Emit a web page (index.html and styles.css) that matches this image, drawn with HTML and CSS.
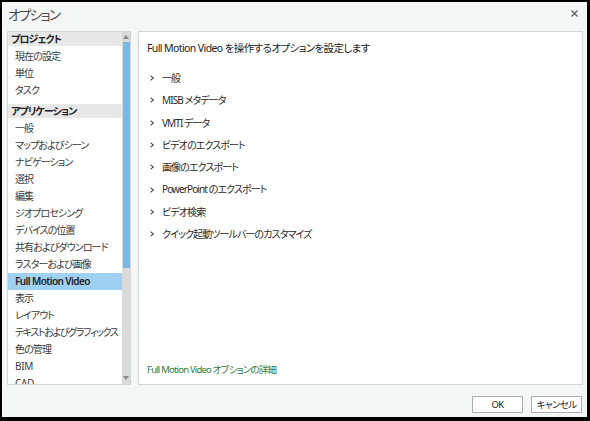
FILE: index.html
```html
<!DOCTYPE html>
<html lang="ja">
<head>
<meta charset="utf-8">
<link rel="stylesheet" href="styles.css">
</head>
<body>
<div class="dialog">
  <div class="titlebar">
    <span class="title">オプション</span>
    <svg class="close" width="7" height="7" viewBox="0 0 7 7"><path d="M0.5 0.5 L6.5 6.5 M6.5 0.5 L0.5 6.5" stroke="#555" stroke-width="1.1" fill="none"/></svg>
  </div>
  <div class="main">
    <div class="nav">
      <div class="navlist">
        <div class="group">プロジェクト</div>
        <div class="item">現在の設定</div>
        <div class="item">単位</div>
        <div class="item">タスク</div>
        <div class="group group2">アプリケーション</div>
        <div class="item">一般</div>
        <div class="item">マップおよびシーン</div>
        <div class="item">ナビゲーション</div>
        <div class="item">選択</div>
        <div class="item">編集</div>
        <div class="item">ジオプロセシング</div>
        <div class="item">デバイスの位置</div>
        <div class="item">共有およびダウンロード</div>
        <div class="item">ラスターおよび画像</div>
        <div class="item selected">Full Motion Video</div>
        <div class="item">表示</div>
        <div class="item">レイアウト</div>
        <div class="item tight">テキストおよびグラフィックス</div>
        <div class="item">色の管理</div>
        <div class="item latin">BIM</div>
        <div class="item latin">CAD</div>
      </div>
      <div class="scrollbar">
        <div class="arrow up"></div>
        <div class="thumb"></div>
        <div class="track"></div>
        <div class="arrow down"></div>
      </div>
    </div>
    <div class="content">
      <div class="heading">Full Motion Video を操作するオプションを設定します</div>
      <div class="sections">
        <div class="section"><span class="chev"></span>一般</div>
        <div class="section"><span class="chev"></span>MISB メタデータ</div>
        <div class="section"><span class="chev"></span>VMTI データ</div>
        <div class="section"><span class="chev"></span>ビデオのエクスポート</div>
        <div class="section"><span class="chev"></span>画像のエクスポート</div>
        <div class="section"><span class="chev"></span>PowerPoint のエクスポート</div>
        <div class="section"><span class="chev"></span>ビデオ検索</div>
        <div class="section"><span class="chev"></span>クイック起動ツールバーのカスタマイズ</div>
      </div>
      <div class="link">Full Motion Video オプションの詳細</div>
    </div>
  </div>
  <div class="buttons">
    <button class="btn">OK</button>
    <button class="btn">キャンセル</button>
  </div>
</div>
</body>
</html>
```
FILE: styles.css
```css
html, body {
  margin: 0;
  padding: 0;
  background: #000;
  width: 590px;
  height: 421px;
  overflow: hidden;
}
body {
  font-family: "Noto Sans", "Noto Sans CJK JP", sans-serif;
  font-feature-settings: "palt";
  color: #262626;
}
.dialog {
  margin: 2px 3px 0 2px;
  width: 585px;
  height: 415px;
  background: #f5f6f6;
  display: flex;
  flex-direction: column;
}
.titlebar {
  height: 29px;
  display: flex;
  align-items: center;
  justify-content: space-between;
  padding: 0 9px 0 6px;
}
.title {
  font-size: 13.5px;
  letter-spacing: -1.6px;
  color: #4a4a4a;
  margin-top: -6px;
}
.close {
  margin-top: -6px;
}
.main {
  height: 354px;
  display: flex;
  padding: 0 4px 0 5px;
  gap: 7px;
}
.nav {
  width: 122px;
  border: 1px solid #d4d4d4;
  background: #fff;
  display: flex;
  overflow: hidden;
}
.navlist {
  flex: 1;
  min-width: 0;
  overflow: hidden;
  font-size: 10px;
  letter-spacing: -0.9px;
}
.group {
  height: 14px;
  line-height: 14px;
  background: #e8e8e8;
  font-weight: bold;
  padding-left: 3px;
  margin-bottom: 2px;
  color: #222;
}
.group2 {
  margin-top: 5px;
}
.item {
  height: 17px;
  line-height: 17px;
  padding-left: 7px;
  white-space: nowrap;
  color: #3a3a3a;
}
.item.tight {
  letter-spacing: -1.4px;
}
.item.latin {
  letter-spacing: -0.3px;
}
.item.selected {
  background: #9fd1f2;
  font-weight: 600;
  color: #222;
  letter-spacing: -0.6px;
}
.scrollbar {
  width: 8px;
  flex: none;
  background: #dadada;
  display: flex;
  flex-direction: column;
  align-items: center;
}
.arrow {
  width: 0;
  height: 0;
  border-left: 3px solid transparent;
  border-right: 3px solid transparent;
}
.arrow.up {
  border-bottom: 4px solid #8a8a8a;
  margin: 3px 0 3px;
}
.arrow.down {
  border-top: 4px solid #8a8a8a;
  margin: 2px 0 4px;
}
.thumb {
  width: 7px;
  height: 226px;
  background: #78b8e6;
}
.track {
  flex: 1;
}
.content {
  flex: 1;
  border: 1px solid #d6d6d6;
  background: #fff;
  display: flex;
  flex-direction: column;
  padding: 0 0 0 8px;
}
.heading {
  font-size: 10.5px;
  letter-spacing: -0.6px;
  margin-top: 8px;
  height: 16px;
  line-height: 16px;
  color: #222;
}
.sections {
  margin-top: 11px;
}
.section {
  height: 22.3px;
  line-height: 22.3px;
  font-size: 10px;
  letter-spacing: -0.9px;
  display: flex;
  align-items: center;
  color: #2a2a2a;
}
.chev {
  width: 3px;
  height: 3px;
  border-right: 1.3px solid #444;
  border-bottom: 1.3px solid #444;
  transform: rotate(-45deg);
  margin: 0 9px 0 2px;
}
.link {
  margin-top: auto;
  margin-bottom: 7px;
  font-size: 9.5px;
  letter-spacing: -0.8px;
  color: #2f7d3a;
  line-height: 14px;
}
.buttons {
  display: flex;
  justify-content: flex-end;
  gap: 8px;
  padding: 11px 5px 0 0;
}
.btn {
  width: 51px;
  height: 17px;
  border: 1px solid #adadad;
  background: #fff;
  font-family: "Noto Sans", "Noto Sans CJK JP", sans-serif;
  font-feature-settings: "palt";
  font-size: 9.5px;
  letter-spacing: -0.6px;
  color: #222;
  padding: 0;
  line-height: 15px;
}
```
